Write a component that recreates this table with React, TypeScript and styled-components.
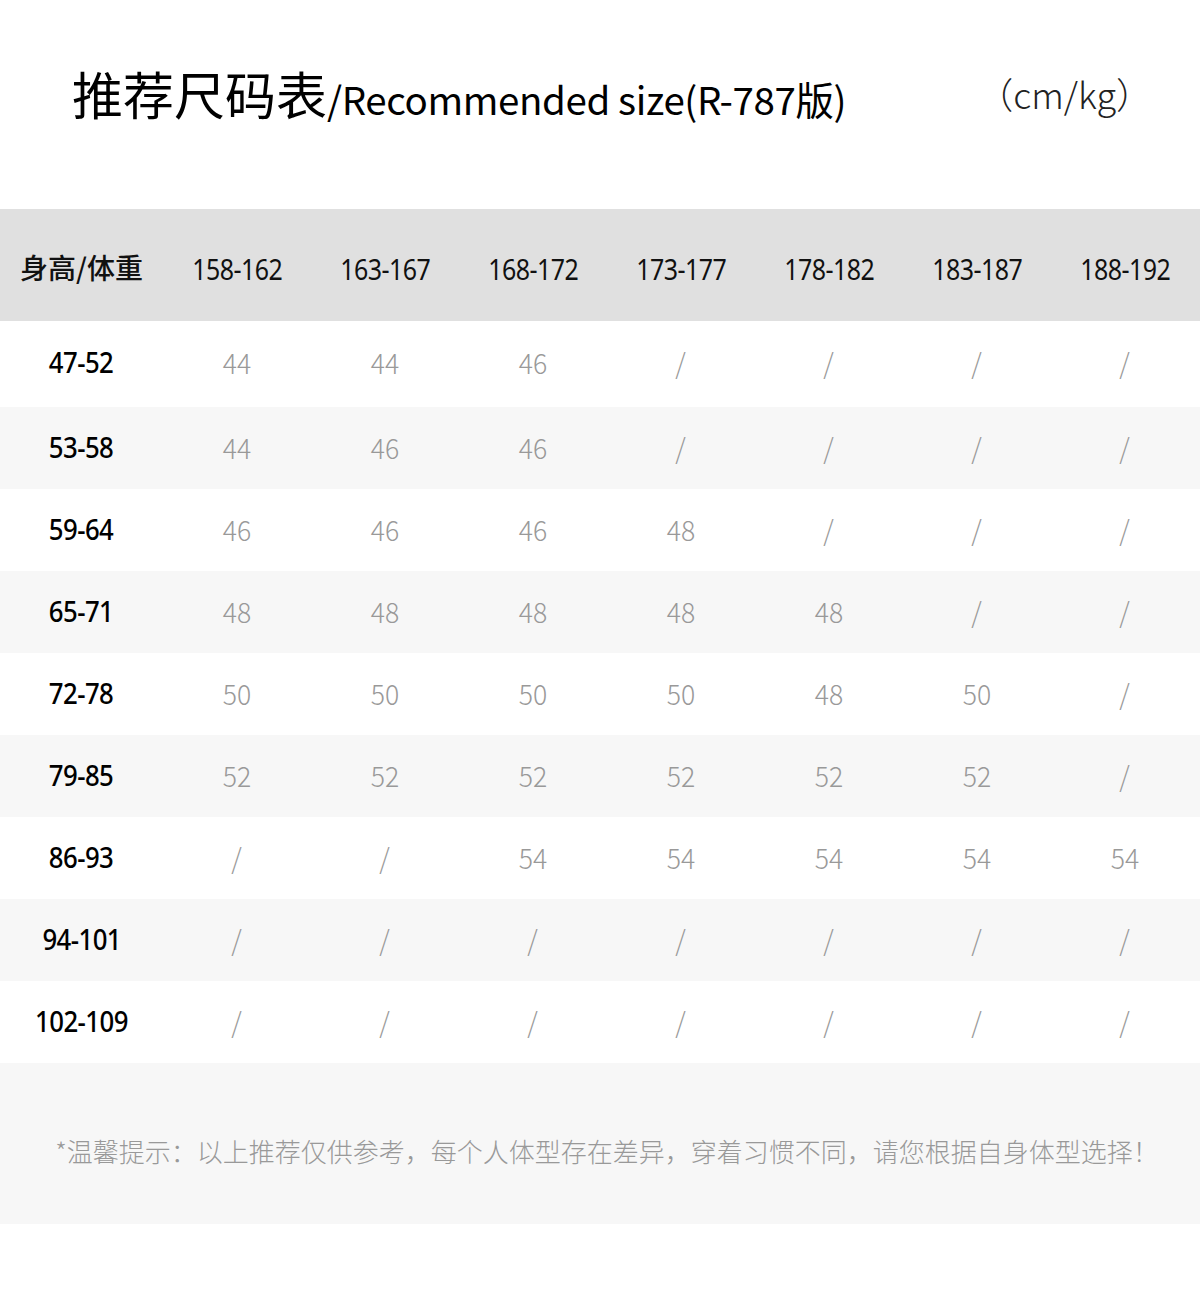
import styled, { createGlobalStyle } from 'styled-components';

const GlobalStyle = createGlobalStyle`
  html, body {
    margin: 0;
    padding: 0;
    background: #fff;
  }
  body {
    font-family: 'Noto Sans', 'Noto Sans CJK SC', sans-serif;
  }
`;

const heights = ['158-162', '163-167', '168-172', '173-177', '178-182', '183-187', '188-192'];

const rows: { weight: string; sizes: string[] }[] = [
  { weight: '47-52', sizes: ['44', '44', '46', '/', '/', '/', '/'] },
  { weight: '53-58', sizes: ['44', '46', '46', '/', '/', '/', '/'] },
  { weight: '59-64', sizes: ['46', '46', '46', '48', '/', '/', '/'] },
  { weight: '65-71', sizes: ['48', '48', '48', '48', '48', '/', '/'] },
  { weight: '72-78', sizes: ['50', '50', '50', '50', '48', '50', '/'] },
  { weight: '79-85', sizes: ['52', '52', '52', '52', '52', '52', '/'] },
  { weight: '86-93', sizes: ['/', '/', '54', '54', '54', '54', '54'] },
  { weight: '94-101', sizes: ['/', '/', '/', '/', '/', '/', '/'] },
  { weight: '102-109', sizes: ['/', '/', '/', '/', '/', '/', '/'] },
];

function SizeChart() {
  return (
    <Page>
      <TitleBar>
        <Title>
          <TitleCn>推荐尺码表</TitleCn>
          <TitleEn>/Recommended size(R-787版)</TitleEn>
        </Title>
        <Unit>（cm/kg）</Unit>
      </TitleBar>

      <Table>
        <HeadRow>
          <HeadLabel>身高/体重</HeadLabel>
          {heights.map((h) => (
            <HeadCell key={h}>{h}</HeadCell>
          ))}
        </HeadRow>
        {rows.map((row, i) => (
          <Row key={row.weight} $striped={i % 2 === 1} $tall={i === 0}>
            <RowLabel>{row.weight}</RowLabel>
            {row.sizes.map((s, j) => (
              <Cell key={j}>{s}</Cell>
            ))}
          </Row>
        ))}
      </Table>

      <Note>*温馨提示：以上推荐仅供参考，每个人体型存在差异，穿着习惯不同，请您根据自身体型选择！</Note>
    </Page>
  );
}

const Page = styled.div`
  width: 1200px;
  height: 1307px;
  background: #fff;
`;

const TitleBar = styled.div`
  height: 209px;
  display: flex;
  align-items: flex-start;
  justify-content: space-between;
  padding: 58px 48px 0 72px;
  box-sizing: border-box;
`;

const Title = styled.div`
  display: flex;
  align-items: baseline;
  color: #000;
`;

const TitleCn = styled.span`
  font-family: 'Noto Sans CJK SC', sans-serif;
  font-size: 51px;
  line-height: 70px;
  font-weight: 400;
`;

const TitleEn = styled.span`
  font-family: 'Noto Sans CJK SC', sans-serif;
  font-size: 38.5px;
  font-weight: 400;
  letter-spacing: -0.4px;
`;

const Unit = styled.span`
  font-family: 'Noto Sans CJK SC', sans-serif;
  font-size: 36px;
  font-weight: 300;
  line-height: 70px;
  color: #222;
`;

const Table = styled.div`
  display: flex;
  flex-direction: column;
`;

const grid = `
  display: grid;
  grid-template-columns: 163px repeat(7, 148px);
  align-items: center;
  justify-items: center;
`;

// DIN-like narrow digits
const narrow = `
  font-family: 'Noto Sans', 'Roboto', sans-serif;
  display: inline-block;
  white-space: nowrap;
`;

const HeadRow = styled.div`
  ${grid}
  height: 112px;
  background: #e0e0e0;
  padding-top: 6px;
  box-sizing: border-box;
`;

const HeadLabel = styled.div`
  font-family: 'Noto Sans CJK SC', sans-serif;
  font-size: 28px;
  font-weight: 500;
  color: #111;
  margin-top: -2px;
`;

const HeadCell = styled.div`
  ${narrow}
  transform: scaleX(0.86);
  font-size: 29px;
  font-weight: 400;
  letter-spacing: -0.6px;
  color: #111;
`;

const Row = styled.div<{ $striped: boolean; $tall: boolean }>`
  ${grid}
  height: ${(p) => (p.$tall ? 86 : 82)}px;
  background: ${(p) => (p.$striped ? '#f7f7f7' : '#fff')};
  padding-bottom: ${(p) => (p.$tall ? 5 : 2)}px;
  box-sizing: border-box;
`;

const RowLabel = styled.div`
  ${narrow}
  transform: scaleX(0.92);
  font-size: 28px;
  font-weight: 500;
  letter-spacing: -0.6px;
  color: #000;
`;

const Cell = styled.div`
  ${narrow}
  transform: scaleX(0.95);
  font-family: 'Noto Sans CJK SC', sans-serif;
  font-size: 28px;
  font-weight: 300;
  color: #999;
`;

const Note = styled.div`
  height: 161px;
  background: #f7f7f7;
  display: flex;
  align-items: center;
  justify-content: center;
  font-family: 'Noto Sans CJK SC', sans-serif;
  font-size: 26px;
  font-weight: 300;
  color: #999;
  padding: 14px 0 0 14px;
  box-sizing: border-box;
`;

export default function App() {
  return (
    <>
      <GlobalStyle />
      <SizeChart />
    </>
  );
}
